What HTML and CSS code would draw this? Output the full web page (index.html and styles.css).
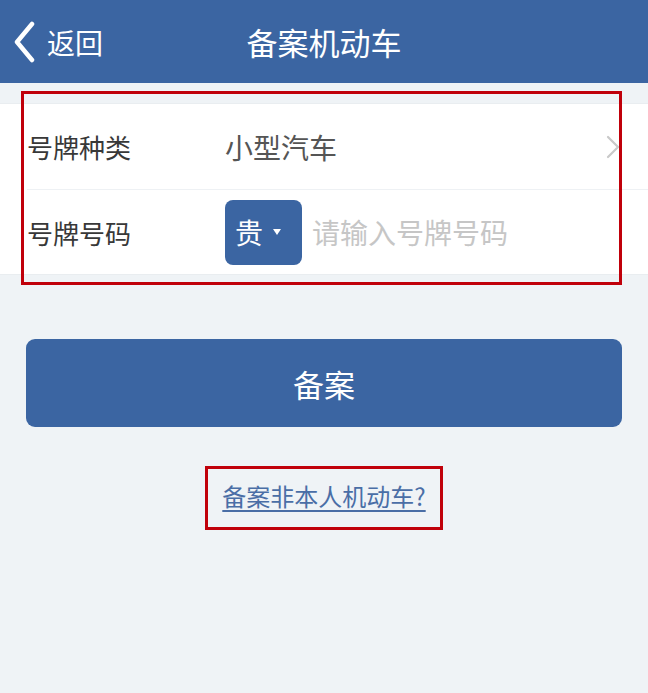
FILE: index.html
```html
<!DOCTYPE html>
<html lang="zh-CN">
<head>
    <meta charset="UTF-8">
    <meta name="viewport" content="width=device-width, initial-scale=1.0">
    <title>备案机动车</title>
    <link rel="stylesheet" href="styles.css">
</head>
<body>
    <header class="topbar">
        <a href="#" class="back">
            <svg class="back-icon" width="24" height="42" viewBox="0 0 24 42">
                <path d="M20 3 L5 21 L20 39" fill="none" stroke="#fff" stroke-width="4.5" stroke-linecap="round" stroke-linejoin="round"/>
            </svg>
            <span>返回</span>
        </a>
        <h1 class="title">备案机动车</h1>
        <span class="spacer"></span>
    </header>

    <main class="page">
        <div class="list">
            <div class="row">
                <span class="label">号牌种类</span>
                <span class="value">小型汽车</span>
                <svg class="arrow" width="14" height="24" viewBox="0 0 14 24">
                    <path d="M2 2 L12 12 L2 22" fill="none" stroke="#c9c9c9" stroke-width="2.2" stroke-linecap="round"/>
                </svg>
            </div>
            <div class="row">
                <span class="label">号牌号码</span>
                <button class="province">贵<i class="caret"></i></button>
                <input type="text" class="plate" placeholder="请输入号牌号码">
            </div>
        </div>

        <div class="actions">
            <button class="submit">备案</button>
            <a href="#" class="other">备案非本人机动车?</a>
        </div>

        <div class="mark mark-form"></div>
        <div class="mark mark-link"></div>
    </main>
</body>
</html>
```

FILE: styles.css
```css
html{
    box-sizing: border-box;
    font-family: "Noto Sans CJK SC", "Noto Sans", sans-serif;
}
*,*::before,*::after{
    box-sizing: inherit;
    padding: 0;
    margin: 0;
}
body{
    background-color: #eff3f6;
    width: 648px;
    height: 693px;
    overflow: hidden;
}
.topbar{
    height: 83px;
    background-color: #3b65a2;
    display: grid;
    grid-template-columns: 1fr auto 1fr;
    align-items: center;
    color: #fff;
}
.back{
    display: flex;
    align-items: center;
    color: #fff;
    text-decoration: none;
    font-size: 28px;
    padding-left: 12px;
}
.back-icon{
    margin-right: 11px;
    margin-top: 1px;
}
.title{
    font-size: 31px;
    font-weight: normal;
    letter-spacing: 0;
}
.page{
    position: relative;
    padding-top: 20px;
    height: 610px;
}
.list{
    background-color: #fff;
    border-top: 1px solid #e9edf0;
    border-bottom: 1px solid #e9edf0;
}
.row{
    display: flex;
    align-items: center;
    height: 85px;
    padding-left: 27px;
    position: relative;
}
.row + .row{
    border-top: 1px solid #eef1f4;
    margin-left: 27px;
    padding-left: 0;
}
.label{
    width: 198px;
    font-size: 26px;
    color: #383838;
}
.value{
    font-size: 28px;
    color: #555;
    flex: 1;
}
.arrow{
    margin-right: 28px;
}
.province{
    width: 77px;
    height: 65px;
    border: none;
    border-radius: 8px;
    background-color: #3b65a2;
    color: #fff;
    font-family: inherit;
    font-size: 28px;
    display: flex;
    align-items: center;
    padding-left: 10px;
}
.caret{
    display: inline-block;
    width: 0;
    height: 0;
    border-left: 4px solid transparent;
    border-right: 4px solid transparent;
    border-top: 6px solid #fff;
    margin-left: 10px;
}
.plate{
    border: none;
    outline: none;
    font-family: inherit;
    font-size: 28px;
    margin-left: 10px;
    flex: 1;
    background: transparent;
}
.plate::placeholder{
    color: #c6c6c6;
}
.actions{
    display: flex;
    flex-direction: column;
    align-items: center;
    padding: 64px 26px 0;
}
.submit{
    width: 100%;
    height: 88px;
    border: none;
    border-radius: 9px;
    background-color: #3b65a2;
    color: #fff;
    font-family: inherit;
    font-size: 31px;
}
.other{
    margin-top: 51px;
    font-size: 24px;
    color: #4a6ea6;
    text-decoration: underline;
    text-underline-offset: 4px;
}
.mark{
    position: absolute;
    border: 3px solid #c0000a;
}
.mark-form{
    left: 21px;
    top: 8px;
    width: 601px;
    height: 194px;
}
.mark-link{
    left: 205px;
    top: 383px;
    width: 238px;
    height: 64px;
}
```
